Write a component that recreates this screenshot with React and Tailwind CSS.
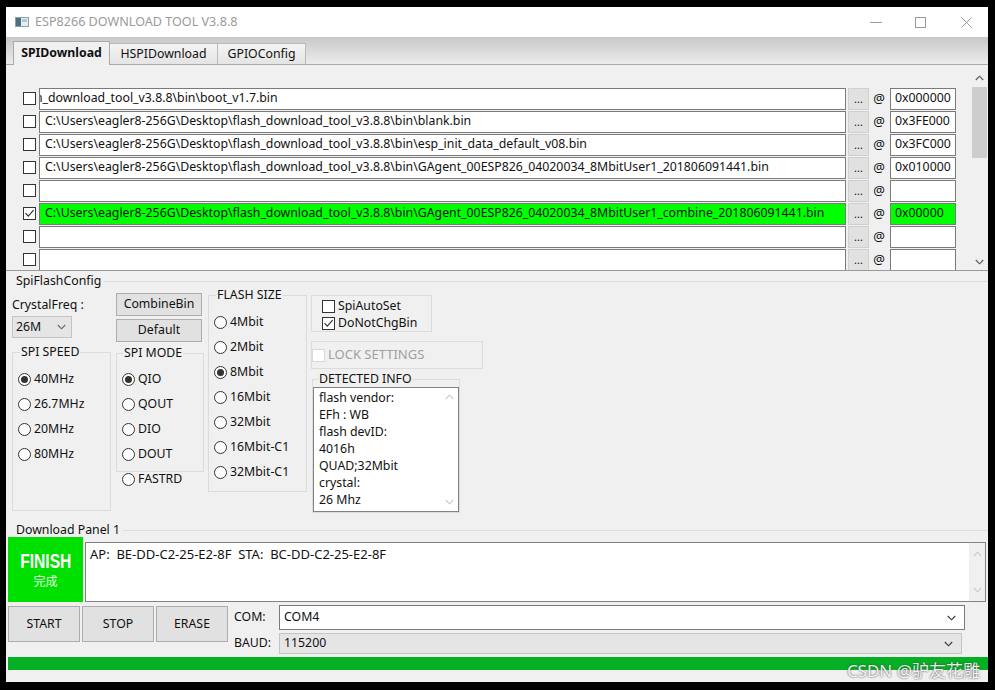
import React from "react";

const files = [
  { path: "n_download_tool_v3.8.8\\bin\\boot_v1.7.bin", addr: "0x000000", shift: true },
  { path: "C:\\Users\\eagler8-256G\\Desktop\\flash_download_tool_v3.8.8\\bin\\blank.bin", addr: "0x3FE000" },
  { path: "C:\\Users\\eagler8-256G\\Desktop\\flash_download_tool_v3.8.8\\bin\\esp_init_data_default_v08.bin", addr: "0x3FC000" },
  { path: "C:\\Users\\eagler8-256G\\Desktop\\flash_download_tool_v3.8.8\\bin\\GAgent_00ESP826_04020034_8MbitUser1_201806091441.bin", addr: "0x010000" },
  { path: "", addr: "" },
  {
    path: "C:\\Users\\eagler8-256G\\Desktop\\flash_download_tool_v3.8.8\\bin\\GAgent_00ESP826_04020034_8MbitUser1_combine_201806091441.bin",
    addr: "0x00000",
    checked: true,
  },
  { path: "", addr: "" },
  { path: "", addr: "" },
];

const info = ["flash vendor:", "EFh : WB", "flash devID:", "4016h", "QUAD;32Mbit", "crystal:", "26 Mhz"];

function Check({ checked = false, disabled = false }) {
  return (
    <span
      className={`flex h-[13px] w-[13px] shrink-0 items-center justify-center border bg-white ${
        disabled ? "border-[#d9d9d9]" : "border-[#333333]"
      }`}
    >
      {checked && (
        <svg width="11" height="11" viewBox="0 0 11 11">
          <path d="M1.5 5.2 L4.3 8.2 L9.6 2.2" fill="none" stroke="#333" strokeWidth="1.2" />
        </svg>
      )}
    </span>
  );
}

function Radio({ checked = false, label }) {
  return (
    <div className="flex h-[25px] items-center">
      <span className="flex h-[13px] w-[13px] shrink-0 items-center justify-center rounded-full border border-[#333333] bg-white">
        {checked && <span className="h-[7px] w-[7px] rounded-full bg-[#333333]" />}
      </span>
      <span className="ml-[3px] whitespace-nowrap">{label}</span>
    </div>
  );
}

function Chevron({ up = false, color = "#555" }) {
  return (
    <svg width="9" height="6" viewBox="0 0 9 6">
      <path d={up ? "M0.8 5 L4.5 1.2 L8.2 5" : "M0.8 1 L4.5 4.8 L8.2 1"} fill="none" stroke={color} strokeWidth="1.1" />
    </svg>
  );
}

function Button({ className, children }) {
  return (
    <div className={`flex items-center justify-center border border-[#adadad] bg-[#e1e1e1] ${className}`}>{children}</div>
  );
}

function FileRow({ row }) {
  const green = row.checked;
  return (
    <div className="flex h-[23px] items-center">
      <Check checked={row.checked} />
      <div
        className={`ml-[3px] flex h-[22px] w-[807px] items-center overflow-hidden whitespace-nowrap border border-[#7a7a7a] pl-[5px] ${
          green ? "bg-[#00ff00]" : "bg-white"
        }`}
      >
        <span className={row.shift ? "-ml-[10px]" : ""}>{row.path}</span>
      </div>
      <Button className="ml-[2px] h-[22px] w-[21px] border-[#d0d0d0] text-[11px] leading-none">...</Button>
      <span className="w-[20px] text-center text-[13px]">@</span>
      <div
        className={`ml-[1px] flex h-[22px] w-[66px] items-center border border-[#7a7a7a] pl-[4px] ${
          green ? "bg-[#00ff00]" : "bg-white"
        }`}
      >
        {row.addr}
      </div>
    </div>
  );
}

export default function App() {
  return (
    <div className="h-[690px] w-[995px] bg-black pl-[6px] pt-[7px] font-['Noto_Sans','Noto_Sans_CJK_SC',sans-serif] text-[12.3px] text-[#111]">
      <div className="relative flex h-[675px] w-[982px] flex-col bg-[#f0f0f0]">
        {/* title bar */}
        <div className="flex h-[30px] shrink-0 items-center bg-white">
          <svg className="ml-[9px]" width="14" height="10" viewBox="0 0 14 10">
            <rect x="0.5" y="0.5" width="13" height="9" fill="#e6edf1" stroke="#8aa0ac" />
            <rect x="1" y="1" width="5" height="8" fill="#4d7080" />
            <rect x="7" y="2" width="5" height="3" fill="#b8c8d0" />
          </svg>
          <span className="ml-[6px] text-[12.6px] text-[#9a9a9a]">ESP8266 DOWNLOAD TOOL V3.8.8</span>
          <div className="ml-auto flex items-center">
            <svg width="12" height="12" viewBox="0 0 12 12" className="mr-[33px]">
              <path d="M0 6.5 H12" stroke="#999" strokeWidth="1" />
            </svg>
            <svg width="11" height="11" viewBox="0 0 11 11" className="mr-[35px]">
              <rect x="0.5" y="0.5" width="10" height="10" fill="none" stroke="#999" />
            </svg>
            <svg width="11" height="11" viewBox="0 0 11 11" className="mr-[16px]">
              <path d="M0.5 0.5 L10.5 10.5 M10.5 0.5 L0.5 10.5" stroke="#999" strokeWidth="1" />
            </svg>
          </div>
        </div>

        {/* tabs */}
        <div className="flex h-[28px] shrink-0 items-end border-b border-[#a9a9a9] bg-gradient-to-b from-[#c8c8c8] to-[#ececec] pl-[7px]">
          <div className="-mb-[1px] flex h-[24px] w-[97px] items-center justify-center border-x border-t border-[#a9a9a9] bg-[#f0f0f0] font-bold">
            SPIDownload
          </div>
          <div className="flex h-[21px] w-[108px] items-center justify-center border-r border-t border-[#b9b9b9] bg-gradient-to-b from-[#f4f4f4] to-[#e4e4e4]">
            HSPIDownload
          </div>
          <div className="flex h-[21px] w-[88px] items-center justify-center border-r border-t border-[#b9b9b9] bg-gradient-to-b from-[#f4f4f4] to-[#e4e4e4]">
            GPIOConfig
          </div>
        </div>

        {/* file list */}
        <div className="flex h-[206px] shrink-0 border-b border-[#9a9a9a]">
          <div className="flex-1 overflow-hidden pl-[17px] pt-[22px]">
            {files.map((row, i) => (
              <FileRow key={i} row={row} />
            ))}
          </div>
          <div className="flex w-[17px] flex-col items-center pt-[4px]">
            <div className="flex h-[17px] items-center">
              <Chevron up />
            </div>
            <div className="mt-[1px] h-[71px] w-[15px] bg-[#cdcdcd]" />
            <div className="flex-1" />
            <div className="flex h-[17px] items-center">
              <Chevron />
            </div>
          </div>
        </div>

        {/* SpiFlashConfig */}
        <div className="flex h-[251px] shrink-0 flex-col">
          <div className="mt-[2px] flex h-[16px] items-center pl-[10px] leading-[16px]">
            <span>SpiFlashConfig</span>
            <span className="ml-[3px] flex-1 border-t border-[#dcdcdc]" />
          </div>
          <div className="flex items-start pl-[6px]">
            {/* col 1 */}
            <div className="flex w-[99px] flex-col">
              <span className="mt-[8px] leading-[16px]">CrystalFreq :</span>
              <div className="mt-[3px] flex h-[22px] w-[60px] items-center justify-between border border-[#c4c4c4] bg-[#e5e5e5] pl-[3px] pr-[5px]">
                <span>26M</span>
                <Chevron color="#666" />
              </div>
              <fieldset className="mt-[6px] h-[167px] border border-[#dcdcdc]">
                <legend className="ml-[7px] px-[1px] leading-[16px]">SPI SPEED</legend>
                <div className="pl-[5px] pt-[7px]">
                  <Radio checked label="40MHz" />
                  <Radio label="26.7MHz" />
                  <Radio label="20MHz" />
                  <Radio label="80MHz" />
                </div>
              </fieldset>
            </div>

            {/* col 2 */}
            <div className="ml-[5px] flex w-[88px] flex-col">
              <Button className="mt-[4px] h-[23px] w-[86px]">CombineBin</Button>
              <Button className="mt-[3px] h-[23px] w-[86px]">Default</Button>
              <fieldset className="mt-[3px] h-[127px] border border-[#dcdcdc]">
                <legend className="ml-[6px] px-[1px] leading-[16px]">SPI MODE</legend>
                <div className="pl-[5px] pt-[6px]">
                  <Radio checked label="QIO" />
                  <Radio label="QOUT" />
                  <Radio label="DIO" />
                  <Radio label="DOUT" />
                </div>
              </fieldset>
              <div className="-mt-[5px] pl-[6px]">
                <Radio label="FASTRD" />
              </div>
            </div>

            {/* col 3 */}
            <fieldset className="-mt-[2px] ml-[4px] h-[205px] w-[99px] border border-[#dcdcdc]">
              <legend className="ml-[7px] px-[1px] leading-[16px]">FLASH SIZE</legend>
              <div className="pl-[5px] pt-[7px]">
                <Radio label="4Mbit" />
                <Radio label="2Mbit" />
                <Radio checked label="8Mbit" />
                <Radio label="16Mbit" />
                <Radio label="32Mbit" />
                <Radio label="16Mbit-C1" />
                <Radio label="32Mbit-C1" />
              </div>
            </fieldset>

            {/* col 4 */}
            <div className="ml-[4px] flex flex-col">
              <div className="mt-[6px] h-[37px] w-[121px] border border-[#dcdcdc] pl-[10px] pt-[2px]">
                <div className="flex h-[17px] items-center">
                  <Check />
                  <span className="ml-[3px]">SpiAutoSet</span>
                </div>
                <div className="flex h-[17px] items-center">
                  <Check checked />
                  <span className="ml-[3px]">DoNotChgBin</span>
                </div>
              </div>
              <div className="mt-[9px] flex h-[28px] w-[172px] items-center border border-[#dcdcdc]">
                <Check disabled />
                <span className="ml-[3px] text-[13px] text-[#a0a0a0]">LOCK SETTINGS</span>
              </div>
              <fieldset className="ml-[1px] mt-[2px] w-[148px] border border-[#dcdcdc]">
                <legend className="ml-[5px] px-[1px] leading-[16px]">DETECTED INFO</legend>
                <div className="flex h-[125px] border border-[#828282] bg-white">
                  <div className="flex-1 pl-[5px] pt-[1px] leading-[17px]">
                    {info.map((t) => (
                      <div key={t}>{t}</div>
                    ))}
                  </div>
                  <div className="flex w-[17px] flex-col items-center justify-between py-[6px]">
                    <Chevron up color="#c8c8c8" />
                    <Chevron color="#c8c8c8" />
                  </div>
                </div>
              </fieldset>
            </div>
          </div>
        </div>

        {/* Download Panel */}
        <div className="flex h-[16px] shrink-0 items-center pl-[10px] leading-[16px]">
          <span>Download Panel 1</span>
          <span className="ml-[3px] flex-1 border-t border-[#dcdcdc]" />
        </div>
        <div className="-mt-[1px] flex items-end pl-[2px]">
          <div className="flex h-[65px] w-[75px] flex-col items-center justify-center bg-[#00e000] text-white">
            <span className="scale-x-[0.78] font-['Liberation_Sans',sans-serif] text-[20px] font-bold leading-[22px]">
              FINISH
            </span>
            <span className="mt-[2px] text-[12px] leading-[16px] text-[#e6ffe6]">完成</span>
          </div>
          <div className="ml-[2px] flex h-[60px] w-[901px] border border-[#828282] bg-white">
            <div className="flex-1 whitespace-pre pl-[4px] pt-[2px] text-[13px]">AP:  BE-DD-C2-25-E2-8F  STA:  BC-DD-C2-25-E2-8F</div>
            <div className="flex w-[16px] flex-col items-center justify-between bg-[#f0f0f0] py-[8px]">
              <Chevron up color="#c8c8c8" />
              <Chevron color="#c8c8c8" />
            </div>
          </div>
        </div>

        <div className="mt-[3px] flex items-start pl-[2px]">
          <Button className="mt-[1px] h-[36px] w-[72px]">START</Button>
          <Button className="ml-[2px] mt-[1px] h-[36px] w-[72px]">STOP</Button>
          <Button className="ml-[2px] mt-[1px] h-[36px] w-[72px]">ERASE</Button>
          <div className="ml-[6px] flex flex-col">
            <div className="flex h-[25px] items-center">
              <span className="w-[45px]">COM:</span>
              <div className="flex h-[25px] w-[686px] items-center justify-between border border-[#7a7a7a] bg-white pl-[4px] pr-[8px]">
                <span>COM4</span>
                <Chevron color="#333" />
              </div>
            </div>
            <div className="mt-[3px] flex h-[21px] items-center">
              <span className="w-[45px]">BAUD:</span>
              <div className="flex h-[21px] w-[683px] items-center justify-between border border-[#c4c4c4] bg-[#e5e5e5] pl-[4px] pr-[8px]">
                <span>115200</span>
                <Chevron color="#333" />
              </div>
            </div>
          </div>
        </div>

        <div className="ml-[2px] mt-[3px] h-[13px] w-[980px] bg-[#06b025]" />

        <span className="absolute right-[8px] top-[654px] text-[17px] leading-[20px] text-white/90 [text-shadow:0_0_2px_#333]">
          CSDN @驴友花雕
        </span>
      </div>
    </div>
  );
}
